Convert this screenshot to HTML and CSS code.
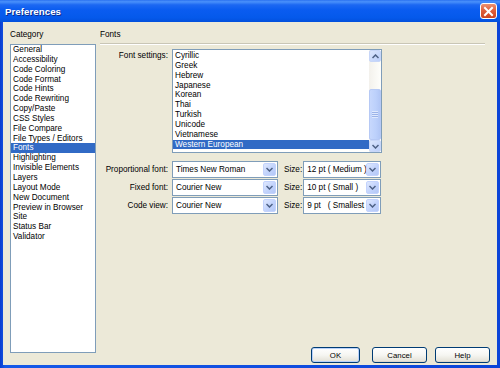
FILE: index.html
```html
<!DOCTYPE html>
<html>
<head>
<meta charset="utf-8">
<title>Preferences</title>
<link rel="stylesheet" href="styles.css">
</head>
<body>
<div class="window">
  <div class="titlebar">
    <span class="title">Preferences</span>
    <span class="close"><svg width="11" height="11" viewBox="0 0 11 11"><path d="M2 2 L9 9 M9 2 L2 9" stroke="#fff" stroke-width="2" stroke-linecap="square"/></svg></span>
  </div>
  <div class="client">
    <div class="cat-col">
      <div class="label">Category</div>
      <ul class="list cat-list">
        <li>General</li>
        <li>Accessibility</li>
        <li>Code Coloring</li>
        <li>Code Format</li>
        <li>Code Hints</li>
        <li>Code Rewriting</li>
        <li>Copy/Paste</li>
        <li>CSS Styles</li>
        <li>File Compare</li>
        <li>File Types / Editors</li>
        <li class="sel">Fonts</li>
        <li>Highlighting</li>
        <li>Invisible Elements</li>
        <li>Layers</li>
        <li>Layout Mode</li>
        <li>New Document</li>
        <li>Preview in Browser</li>
        <li>Site</li>
        <li>Status Bar</li>
        <li>Validator</li>
      </ul>
    </div>
    <div class="panel">
      <div class="panel-head">Fonts</div>
      <div class="settings-row">
        <div class="flabel top">Font settings:</div>
        <div class="listbox">
          <ul class="list enc-list">
            <li>Cyrillic</li>
            <li>Greek</li>
            <li>Hebrew</li>
            <li>Japanese</li>
            <li>Korean</li>
            <li>Thai</li>
            <li>Turkish</li>
            <li>Unicode</li>
            <li>Vietnamese</li>
            <li class="sel">Western European</li>
          </ul>
          <div class="scrollbar">
            <div class="sb-btn"><svg width="7" height="5" viewBox="0 0 7 5"><path d="M0.5 4 L3.5 1 L6.5 4" fill="none" stroke="#4d6185" stroke-width="1.5"/></svg></div>
            <div class="sb-track"><div class="sb-thumb"><span class="grip"></span></div></div>
            <div class="sb-btn"><svg width="7" height="5" viewBox="0 0 7 5"><path d="M0.5 1 L3.5 4 L6.5 1" fill="none" stroke="#4d6185" stroke-width="1.5"/></svg></div>
          </div>
        </div>
      </div>
      <div class="rows">
        <div class="row">
          <div class="flabel">Proportional font:</div>
          <div class="select font-sel"><span class="val">Times New Roman</span><span class="arrow"><svg width="7" height="5" viewBox="0 0 7 5"><path d="M0.5 1 L3.5 4 L6.5 1" fill="none" stroke="#4d6185" stroke-width="1.5"/></svg></span></div>
          <div class="size-label">Size:</div>
          <div class="select size-sel"><span class="val">12 pt ( Medium )</span><span class="arrow"><svg width="7" height="5" viewBox="0 0 7 5"><path d="M0.5 1 L3.5 4 L6.5 1" fill="none" stroke="#4d6185" stroke-width="1.5"/></svg></span></div>
        </div>
        <div class="row">
          <div class="flabel">Fixed font:</div>
          <div class="select font-sel"><span class="val">Courier New</span><span class="arrow"><svg width="7" height="5" viewBox="0 0 7 5"><path d="M0.5 1 L3.5 4 L6.5 1" fill="none" stroke="#4d6185" stroke-width="1.5"/></svg></span></div>
          <div class="size-label">Size:</div>
          <div class="select size-sel"><span class="val">10 pt ( Small )</span><span class="arrow"><svg width="7" height="5" viewBox="0 0 7 5"><path d="M0.5 1 L3.5 4 L6.5 1" fill="none" stroke="#4d6185" stroke-width="1.5"/></svg></span></div>
        </div>
        <div class="row">
          <div class="flabel">Code view:</div>
          <div class="select font-sel"><span class="val">Courier New</span><span class="arrow"><svg width="7" height="5" viewBox="0 0 7 5"><path d="M0.5 1 L3.5 4 L6.5 1" fill="none" stroke="#4d6185" stroke-width="1.5"/></svg></span></div>
          <div class="size-label">Size:</div>
          <div class="select size-sel"><span class="val">9 pt   ( Smallest</span><span class="arrow"><svg width="7" height="5" viewBox="0 0 7 5"><path d="M0.5 1 L3.5 4 L6.5 1" fill="none" stroke="#4d6185" stroke-width="1.5"/></svg></span></div>
        </div>
      </div>
      <div class="buttons">
        <div class="btn btn-ok">OK</div>
        <div class="btn btn-cancel">Cancel</div>
        <div class="btn btn-help">Help</div>
      </div>
    </div>
  </div>
</div>
</body>
</html>
```

FILE: styles.css
```css
* { box-sizing: border-box; }
body { margin: 0; background: #fff; }
.window {
  width: 500px;
  height: 368px;
  background: linear-gradient(90deg, #0a3ccf 0%, #1659e8 1%, #0b44d8 100%);
  display: flex;
  flex-direction: column;
  font-family: "Liberation Sans", Arial, sans-serif;
}
.titlebar {
  height: 22px;
  flex: none;
  display: flex;
  align-items: center;
  justify-content: space-between;
  padding: 1px 3px 0 5px;
  background: linear-gradient(180deg, #2b72f0 0%, #4a91fb 8%, #1c68f2 22%, #0a5cf0 45%, #0559eb 80%, #0350dc 100%);
}
.title {
  color: #fff;
  font-weight: bold;
  font-size: 9.7px;
  text-shadow: 1px 1px 0 #0b2a8a;
  letter-spacing: 0.05px;
}
.close {
  width: 17px;
  height: 16px;
  margin-top: -1px;
  border: 1px solid #fff;
  border-radius: 3px;
  background: linear-gradient(180deg, #ec9272 0%, #e0603c 45%, #cc4420 100%);
  display: flex;
  align-items: center;
  justify-content: center;
}
.client {
  flex: 1;
  margin: 0 3px 3px 3px;
  background: #ece9d8;
  display: flex;
  font-size: 8.2px;
  color: #000;
}
.cat-col {
  width: 93px;
  padding: 8px 0 12px 7px;
  display: flex;
  flex-direction: column;
}
.label { line-height: 10px; height: 10px; }
.list {
  list-style: none;
  margin: 0;
  padding: 0;
  background: #fff;
}
.list li {
  line-height: 9.85px;
  height: 9.85px;
  padding-left: 2px;
  white-space: nowrap;
}
.list li.sel { background: #316ac5; color: #fff; }
.cat-list {
  flex: 1;
  margin-top: 4px;
  border: 1px solid #7f9db9;
}
.panel {
  flex: 1;
  padding: 8px 7px 2px 4px;
  display: flex;
  flex-direction: column;
}
.panel-head {
  line-height: 10px;
  height: 14px;
  padding-bottom: 3px;
  margin-right: 5px;
  border-bottom: 1px solid #c9c6b6;
  box-shadow: 0 1px 0 #fff;
}
.settings-row {
  display: flex;
  margin-top: 5px;
}
.flabel {
  width: 68px;
  margin-right: 4px;
  text-align: right;
  white-space: nowrap;
}
.flabel.top { padding-top: 2px; line-height: 9.85px; }
.listbox {
  width: 210px;
  height: 104px;
  border: 1px solid #7f9db9;
  background: #fff;
  display: flex;
}
.enc-list { flex: 1; padding-top: 1px; }
.scrollbar {
  width: 12px;
  display: flex;
  flex-direction: column;
  background: linear-gradient(90deg, #f3f1ec, #fefefb);
}
.sb-btn {
  height: 12px;
  border: 1px solid #c7d6f8;
  border-radius: 2px;
  background: linear-gradient(135deg, #dbe6fd 0%, #bccffa 100%);
  display: flex;
  align-items: center;
  justify-content: center;
}
.sb-track {
  flex: 1;
  display: flex;
  flex-direction: column;
  justify-content: flex-end;
}
.sb-thumb {
  height: 51px;
  border: 1px solid #b6c9f5;
  border-radius: 2px;
  background: linear-gradient(90deg, #c7d8fd 0%, #bcd0fb 60%, #b2c7f6 100%);
  display: flex;
  align-items: center;
  justify-content: center;
}
.grip {
  width: 6px;
  height: 7px;
  background: repeating-linear-gradient(180deg, #eef3fe 0 1px, #8ca6e0 1px 2px);
  opacity: 0.7;
}
.rows {
  margin-top: 8px;
  display: flex;
  flex-direction: column;
  gap: 1px;
}
.row {
  display: flex;
  align-items: center;
  height: 17px;
}
.select {
  height: 17px;
  border: 1px solid #7f9db9;
  background: #fff;
  display: flex;
  align-items: center;
  padding: 1px;
}
.select .val {
  flex: 1;
  padding-left: 2px;
  white-space: pre;
  overflow: hidden;
}
.arrow {
  width: 13px;
  height: 13px;
  flex: none;
  border: 1px solid #c3d3fd;
  border-radius: 2px;
  background: linear-gradient(135deg, #dfe8fe 0%, #c2d3fc 55%, #b4c8f6 100%);
  display: flex;
  align-items: center;
  justify-content: center;
}
.font-sel { width: 106px; }
.size-label { margin: 0 1px 0 6px; }
.size-sel { width: 78px; }
.buttons {
  margin-top: auto;
  display: flex;
  justify-content: flex-end;
}
.btn {
  height: 16px;
  border: 1px solid #003c74;
  border-radius: 3px;
  background: linear-gradient(180deg, #ffffff 0%, #f6f6f2 50%, #e6e4da 90%, #d6d0c5 100%);
  display: flex;
  align-items: center;
  justify-content: center;
  font-size: 7.8px;
}
.btn-ok { width: 49px; margin-right: 12px; box-shadow: inset 0 0 0 1px #b9d1fa; }
.btn-cancel { width: 55px; margin-right: 8px; }
.btn-help { width: 55px; }
```
